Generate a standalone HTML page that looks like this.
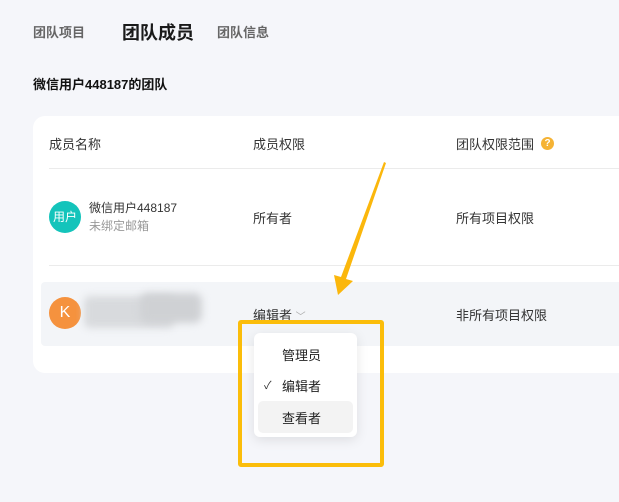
<!DOCTYPE html>
<html><head><meta charset="utf-8"><style>
*{margin:0;padding:0;box-sizing:border-box}
body{width:619px;height:502px;background:#f5f6fa;font-family:"Liberation Sans","Noto Sans CJK SC",sans-serif;position:relative;overflow:hidden;color:#222}
.a{position:absolute;white-space:nowrap}
</style></head><body>
<div class="a" style="left:33px;top:22px;font-size:13px;color:#666;font-weight:bold">团队项目</div>
<div class="a" style="left:122px;top:19px;font-size:18px;color:#1a1a1a;font-weight:bold">团队成员</div>
<div class="a" style="left:217px;top:22px;font-size:13px;color:#666;font-weight:bold">团队信息</div>
<div class="a" style="left:33px;top:74px;font-size:13px;font-weight:bold;color:#111">微信用户448187的团队</div>
<div class="a" style="left:33px;top:116px;width:600px;height:257px;background:#fff;border-radius:12px"></div>
<div class="a" style="left:49px;top:134px;font-size:13px;color:#333">成员名称</div>
<div class="a" style="left:253px;top:134px;font-size:13px;color:#333">成员权限</div>
<div class="a" style="left:456px;top:134px;font-size:13px;color:#333">团队权限范围</div>
<div class="a" style="left:541px;top:137px;width:13px;height:13px;border-radius:50%;background:#f5b335;color:#fff;font-size:10px;font-weight:bold;text-align:center;line-height:13px">?</div>
<div class="a" style="left:49px;top:168px;width:570px;height:1px;background:#ebebeb"></div>
<div class="a" style="left:49px;top:201px;width:32px;height:32px;border-radius:50%;background:#14c4bb;color:#fff;font-size:12px;text-align:center;line-height:32px">用户</div>
<div class="a" style="left:89px;top:199px;font-size:12px;color:#333">微信用户448187</div>
<div class="a" style="left:89px;top:217px;font-size:12px;color:#999">未绑定邮箱</div>
<div class="a" style="left:253px;top:208px;font-size:13px;color:#333">所有者</div>
<div class="a" style="left:456px;top:208px;font-size:13px;color:#333">所有项目权限</div>
<div class="a" style="left:49px;top:265px;width:570px;height:1px;background:#ebebeb"></div>
<div class="a" style="left:41px;top:282px;width:590px;height:64px;background:#f3f5f8;border-radius:4px"></div>
<div class="a" style="left:49px;top:297px;width:32px;height:32px;border-radius:50%;background:#f5923e;color:#fff;font-size:16px;text-align:center;line-height:32px">K</div>
<div class="a" style="left:84px;top:296px;width:90px;height:32px;background:#d8dadd;filter:blur(4px);border-radius:6px"></div>
<div class="a" style="left:140px;top:293px;width:62px;height:30px;background:#cfd1d4;filter:blur(4px);border-radius:8px"></div>
<div class="a" style="left:253px;top:305px;font-size:13px;color:#333">编辑者 <span style="color:#aaa;font-size:10px">﹀</span></div>
<div class="a" style="left:456px;top:305px;font-size:13px;color:#333">非所有项目权限</div>
<div class="a" style="left:254px;top:333px;width:103px;height:104px;background:#fff;border-radius:6px;box-shadow:0 3px 12px rgba(0,0,0,.1)"></div>
<div class="a" style="left:282px;top:345px;font-size:13px;color:#222">管理员</div>
<div class="a" style="left:264px;top:377px;font-size:11px;color:#333">✓</div>
<div class="a" style="left:282px;top:376px;font-size:13px;color:#222">编辑者</div>
<div class="a" style="left:258px;top:401px;width:95px;height:32px;background:#f3f3f3;border-radius:5px"></div>
<div class="a" style="left:282px;top:408px;font-size:13px;color:#222">查看者</div>
<div class="a" style="left:238px;top:320px;width:146px;height:147px;border:4px solid #fbbd0a;border-radius:3px"></div>
<svg class="a" style="left:0;top:0" width="619" height="502"><polygon points="386,163 384,162 341,277 334,275 338,295 353,281 346,279" fill="#fbb70c"/></svg>
</body></html>
